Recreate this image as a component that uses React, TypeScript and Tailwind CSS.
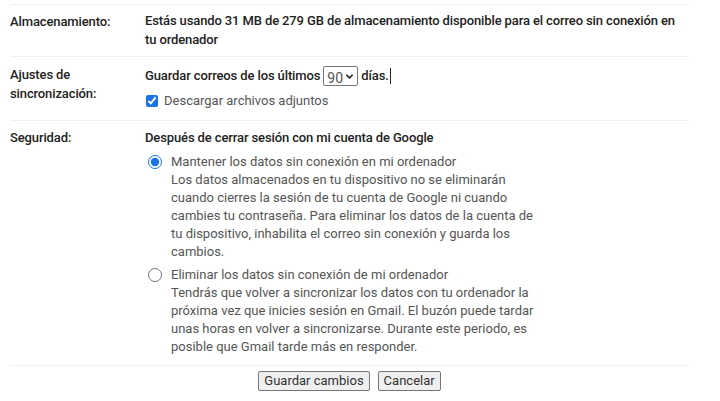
import React, { useState } from "react";

const font = { fontFamily: "Roboto, 'Liberation Sans', Arial, sans-serif" };

const RadioOption = ({
	checked,
	title,
	description,
	onSelect,
}: {
	checked: boolean;
	title: string;
	description: string;
	onSelect: () => void;
}) => (
	<label className="flex cursor-pointer items-start gap-[9px]">
		<input
			type="radio"
			name="seguridad"
			checked={checked}
			onChange={onSelect}
			className="mt-[2px] ml-[3px] h-[14px] w-[14px] shrink-0 accent-[#1a73e8]"
		/>
		<div className="w-[370px] text-[13px] leading-[18px] text-[#555]">
			<div>{title}</div>
			<div>{description}</div>
		</div>
	</label>
);

const App = () => {
	const [keep, setKeep] = useState(true);
	const [days, setDays] = useState("90");
	const [attachments, setAttachments] = useState(true);

	return (
		<div className="min-h-[401px] bg-white px-[10px] pt-[4px] text-[13px] text-[#222]" style={font}>
			<div className="w-[679px]">
				<div className="flex border-t border-[#efefef] pt-[6px] pb-[7px]">
					<div className="w-[135px] shrink-0 pt-[1px] font-medium leading-[19px] tracking-[-0.12px]">Almacenamiento:</div>
					<div className="font-medium leading-[19px] tracking-[-0.12px]">
						Estás usando 31 MB de 279 GB de almacenamiento disponible para el correo sin conexión en tu ordenador
					</div>
				</div>

				<div className="flex border-t border-[#efefef] pt-[8px] pb-[10px]">
					<div className="w-[135px] shrink-0 font-medium leading-[19px] tracking-[-0.12px]">
						Ajustes de
						<br />
						sincronización:
					</div>
					<div>
						<div className="flex items-center font-medium leading-[22px] tracking-[-0.12px]">
							<span>Guardar correos de los últimos</span>
							<div className="relative mx-[3px] h-[20px] w-[35px]">
								<select
									value={days}
									onChange={(e) => setDays(e.target.value)}
									className="h-full w-full appearance-none rounded-[2px] border border-[#767676] bg-white pl-[3px] text-[14px] font-normal tracking-normal text-[#555] outline-none"
								>
									<option value="7">7</option>
									<option value="30">30</option>
									<option value="90">90</option>
								</select>
								<svg
									viewBox="0 0 10 10"
									className="pointer-events-none absolute top-[6px] right-[4px] h-[9px] w-[9px]"
								>
									<path d="M1.5 3 L5 6.5 L8.5 3" fill="none" stroke="#222" strokeWidth="1.8" />
								</svg>
							</div>
							<span>días.</span>
							<span className="ml-[1px] h-[16px] w-px bg-[#222]" />
						</div>
						<label className="mt-[5px] flex items-center gap-[6px] leading-[18px] text-[#555]">
							<input
								type="checkbox"
								checked={attachments}
								onChange={(e) => setAttachments(e.target.checked)}
								className="ml-[1px] h-[12px] w-[12px] accent-[#1a73e8]"
							/>
							Descargar archivos adjuntos
						</label>
					</div>
				</div>

				<div className="flex border-t border-[#efefef] pt-[8px] pb-[9px]">
					<div className="w-[135px] shrink-0 font-medium leading-[18px] tracking-[-0.12px]">Seguridad:</div>
					<div>
						<div className="font-medium leading-[18px] tracking-[-0.12px]">
							Después de cerrar sesión con mi cuenta de Google
						</div>
						<div className="mt-[6px] flex flex-col gap-[5px]">
							<RadioOption
								checked={keep}
								onSelect={() => setKeep(true)}
								title="Mantener los datos sin conexión en mi ordenador"
								description="Los datos almacenados en tu dispositivo no se eliminarán cuando cierres la sesión de tu cuenta de Google ni cuando cambies tu contraseña. Para eliminar los datos de la cuenta de tu dispositivo, inhabilita el correo sin conexión y guarda los cambios."
							/>
							<RadioOption
								checked={!keep}
								onSelect={() => setKeep(false)}
								title="Eliminar los datos sin conexión de mi ordenador"
								description="Tendrás que volver a sincronizar los datos con tu ordenador la próxima vez que inicies sesión en Gmail. El buzón puede tardar unas horas en volver a sincronizarse. Durante este periodo, es posible que Gmail tarde más en responder."
							/>
						</div>
					</div>
				</div>

				<div className="flex justify-center gap-[8px] border-t border-[#efefef] pt-[5px]">
					<button className="h-[20px] rounded-[2px] border border-[#767676] bg-[#efefef] px-[5px] text-[13px] leading-[18px] text-[#333]">
						Guardar cambios
					</button>
					<button className="h-[20px] rounded-[2px] border border-[#767676] bg-[#efefef] px-[5px] text-[13px] leading-[18px] text-[#333]">
						Cancelar
					</button>
				</div>
			</div>
		</div>
	);
};

export default App;
